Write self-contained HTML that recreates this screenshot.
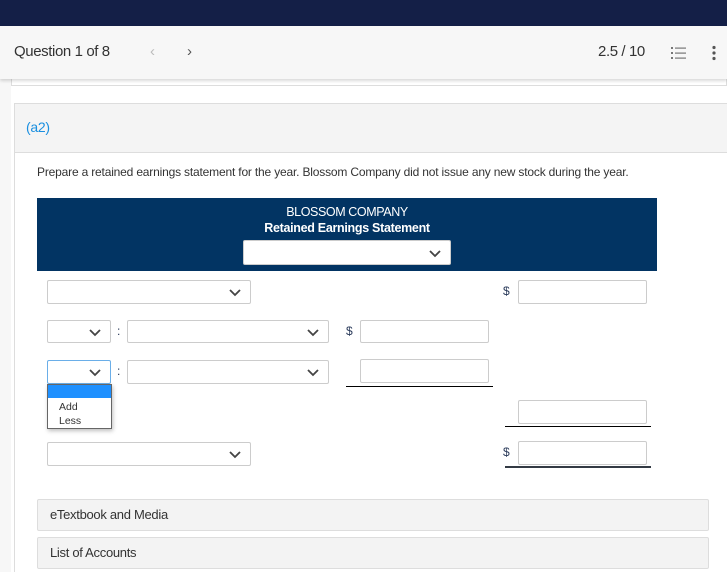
<!DOCTYPE html>
<html><head><meta charset="utf-8"><style>
*{box-sizing:border-box;margin:0;padding:0}
body{width:727px;height:572px;overflow:hidden;background:#f7f7f7;font-family:"Liberation Sans",sans-serif;position:relative;color:#333}
.a{position:absolute}
.sel{position:absolute;background:#fff;border:1px solid #ccc;border-radius:2px}
.sel svg{position:absolute;right:9px;top:50%;margin-top:-3px}
.inp{position:absolute;background:#fff;border:1px solid #ccc;border-radius:2px}
.d{position:absolute;font-size:12px;color:#2a3a5a}
.ul{position:absolute;height:1px;background:#000}
.bar{position:absolute;left:37px;width:672px;height:32px;background:#f3f3f3;border:1px solid #ddd;border-radius:2px;font-size:13px;color:#333;padding:7px 12px;letter-spacing:-0.3px}
</style></head><body>
<div class="a" style="left:0;top:0;width:727px;height:26px;background:#141f47"></div>
<div class="a" style="left:0;top:26px;width:727px;height:53px;background:#f7f7f7;box-shadow:0 2px 3px rgba(0,0,0,.15);z-index:2"></div>
<div class="a" style="left:14px;top:43px;font-size:15px;color:#333;z-index:3;letter-spacing:-0.4px">Question 1 of 8</div>
<div class="a" style="left:150px;top:43px;font-size:15px;color:#bbb;z-index:3">‹</div>
<div class="a" style="left:187px;top:43px;font-size:15px;color:#555;z-index:3">›</div>
<div class="a" style="left:598px;top:43px;font-size:15px;color:#333;z-index:3;letter-spacing:-0.4px">2.5 / 10</div>
<svg class="a" style="left:671px;top:46px;z-index:3" width="16" height="14"><g fill="#777"><rect x="0" y="1" width="2" height="2"/><rect x="0" y="6" width="2" height="2"/><rect x="0" y="11" width="2" height="2"/><rect x="4" y="1.5" width="11" height="1.2"/><rect x="4" y="6.5" width="11" height="1.2"/><rect x="4" y="11.5" width="11" height="1.2"/></g></svg>
<svg class="a" style="left:712px;top:45px;z-index:3" width="4" height="16"><g fill="#555"><circle cx="2" cy="2.5" r="1.6"/><circle cx="2" cy="8" r="1.6"/><circle cx="2" cy="13.5" r="1.6"/></g></svg>
<div class="a" style="left:11px;top:70px;width:716px;height:16px;background:#fff;border:1px solid #ddd;border-top:none"></div>
<div class="a" style="left:11px;top:86px;width:716px;height:486px;background:#fff"></div>
<div class="a" style="left:14px;top:103px;width:713px;height:50px;background:#f4f4f4;border:1px solid #ddd;border-right:none"></div>
<div class="a" style="left:26px;top:119px;font-size:14px;color:#1a8fe0;letter-spacing:-0.3px">(a2)</div>
<div class="a" style="left:14px;top:153px;width:713px;height:419px;background:#fff;border-left:1px solid #ddd"></div>
<div class="a" style="left:37px;top:165px;font-size:12px;color:#333;letter-spacing:-0.18px;white-space:nowrap">Prepare a retained earnings statement for the year. Blossom Company did not issue any new stock during the year.</div>
<div class="a" style="left:37px;top:198px;width:620px;height:73px;background:#023463"></div>
<div class="a" style="left:37px;top:205px;width:620px;text-align:center;font-size:12.5px;color:#fff;letter-spacing:-0.4px">BLOSSOM COMPANY</div>
<div class="a" style="left:37px;top:221px;width:620px;text-align:center;font-size:12.5px;font-weight:bold;color:#fff;letter-spacing:-0.3px">Retained Earnings Statement</div>
<svg width="0" height="0" style="position:absolute"><defs><path id="ch" d="M1 1 L6 6 L11 1" fill="none" stroke="#444" stroke-width="1.8"/></defs></svg>
<div class="sel" style="left:243px;top:240px;width:208px;height:25px"><svg width="12" height="8"><use href="#ch"/></svg></div>

<div class="sel" style="left:47px;top:280px;width:204px;height:24px"><svg width="12" height="8"><use href="#ch"/></svg></div>
<div class="d" style="left:503px;top:284px">$</div>
<div class="inp" style="left:518px;top:280px;width:129px;height:24px"></div>

<div class="sel" style="left:47px;top:320px;width:64px;height:23px"><svg width="12" height="8"><use href="#ch"/></svg></div>
<div class="d" style="left:117px;top:324px">:</div>
<div class="sel" style="left:127px;top:320px;width:202px;height:23px"><svg width="12" height="8"><use href="#ch"/></svg></div>
<div class="d" style="left:346px;top:324px">$</div>
<div class="inp" style="left:360px;top:320px;width:129px;height:23px"></div>

<div class="sel" style="left:47px;top:360px;width:64px;height:24px;border-color:#6aaee8"><svg width="12" height="8"><use href="#ch"/></svg></div>
<div class="d" style="left:117px;top:364px">:</div>
<div class="sel" style="left:127px;top:360px;width:202px;height:24px"><svg width="12" height="8"><use href="#ch"/></svg></div>
<div class="inp" style="left:360px;top:359px;width:129px;height:24px"></div>
<div class="ul" style="left:346px;top:386px;width:147px"></div>

<div class="a" style="left:47px;top:384px;width:65px;height:45px;background:#fff;border:1px solid #666;box-shadow:1px 2px 4px rgba(0,0,0,.25);z-index:4">
<div style="height:13px;background:#1e90ff"></div>
<div style="font-size:10.5px;color:#333;padding-left:11px;line-height:14px;margin-top:2px">Add<br>Less</div></div>

<div class="inp" style="left:518px;top:400px;width:129px;height:24px"></div>
<div class="ul" style="left:505px;top:426px;width:146px"></div>

<div class="sel" style="left:47px;top:442px;width:204px;height:24px"><svg width="12" height="8"><use href="#ch"/></svg></div>
<div class="d" style="left:503px;top:445px">$</div>
<div class="inp" style="left:518px;top:441px;width:129px;height:24px"></div>
<div class="ul" style="left:505px;top:466px;width:146px;height:2px;background:#333a44"></div>

<div class="bar" style="top:499px">eTextbook and Media</div>
<div class="bar" style="top:537px">List of Accounts</div>
</body></html>
